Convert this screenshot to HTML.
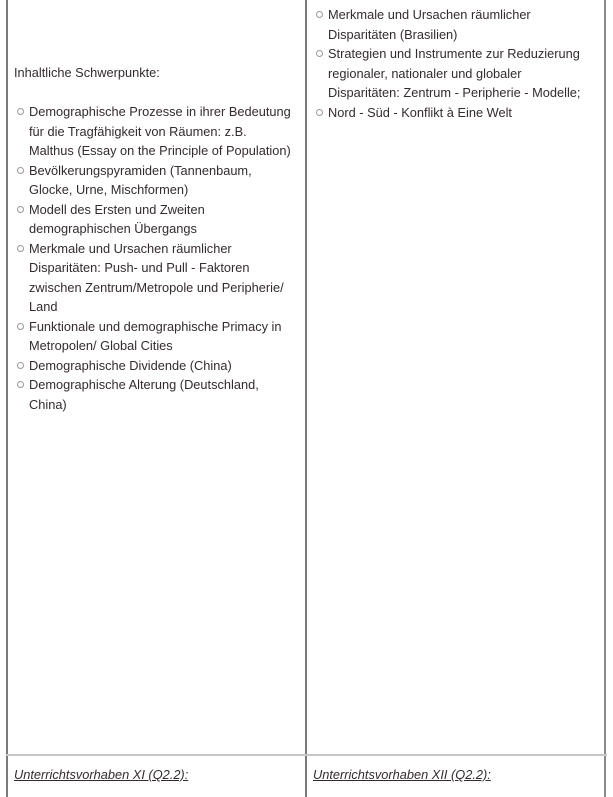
<!DOCTYPE html>
<html><head><meta charset="utf-8"><style>
html,body{margin:0;padding:0;background:#fff;}
body{width:613px;height:797px;position:relative;overflow:hidden;font-family:"Liberation Sans",sans-serif;font-size:12.8px;color:#332b30;}
.v{position:absolute;top:0;width:2px;background:#7a7a7a;}
.h{position:absolute;left:6px;width:601px;top:754px;height:2px;background:#c8c8c8;}
.t{position:absolute;line-height:19.5px;white-space:nowrap;}
ul{list-style:none;margin:0;padding:0;}
li{position:relative;padding-left:0;}
li:before{content:"";position:absolute;left:-12px;top:6px;width:5px;height:5px;border:1px solid #9a9a9a;border-radius:50%;}
.u{text-decoration:underline;font-style:italic;}
</style></head><body>
<div class="v" style="left:6px;height:797px"></div>
<div class="v" style="left:305px;height:797px"></div>
<div class="v" style="left:604px;height:797px;background:#8a8a8a"></div>
<div class="h"></div>

<div class="t" style="left:14px;top:63px">Inhaltliche Schwerpunkte:</div>
<ul class="t" style="left:29px;top:102px">
<li>Demographische Prozesse in ihrer Bedeutung<br>für die Tragfähigkeit von Räumen: z.B.<br>Malthus (Essay on the Principle of Population)</li>
<li>Bevölkerungspyramiden (Tannenbaum,<br>Glocke, Urne, Mischformen)</li>
<li>Modell des Ersten und Zweiten<br>demographischen Übergangs</li>
<li>Merkmale und Ursachen räumlicher<br>Disparitäten: Push- und Pull - Faktoren<br>zwischen Zentrum/Metropole und Peripherie/<br>Land</li>
<li>Funktionale und demographische Primacy in<br>Metropolen/ Global Cities</li>
<li>Demographische Dividende (China)</li>
<li>Demographische Alterung (Deutschland,<br>China)</li>
</ul>

<ul class="t" style="left:328px;top:5px">
<li>Merkmale und Ursachen räumlicher<br>Disparitäten (Brasilien)</li>
<li>Strategien und Instrumente zur Reduzierung<br>regionaler, nationaler und globaler<br>Disparitäten: Zentrum - Peripherie - Modelle;</li>
<li>Nord - Süd - Konflikt à Eine Welt</li>
</ul>

<div class="t u" style="left:14px;top:765px">Unterrichtsvorhaben XI (Q2.2):</div>
<div class="t u" style="left:313px;top:765px">Unterrichtsvorhaben XII (Q2.2):</div>
</body></html>
